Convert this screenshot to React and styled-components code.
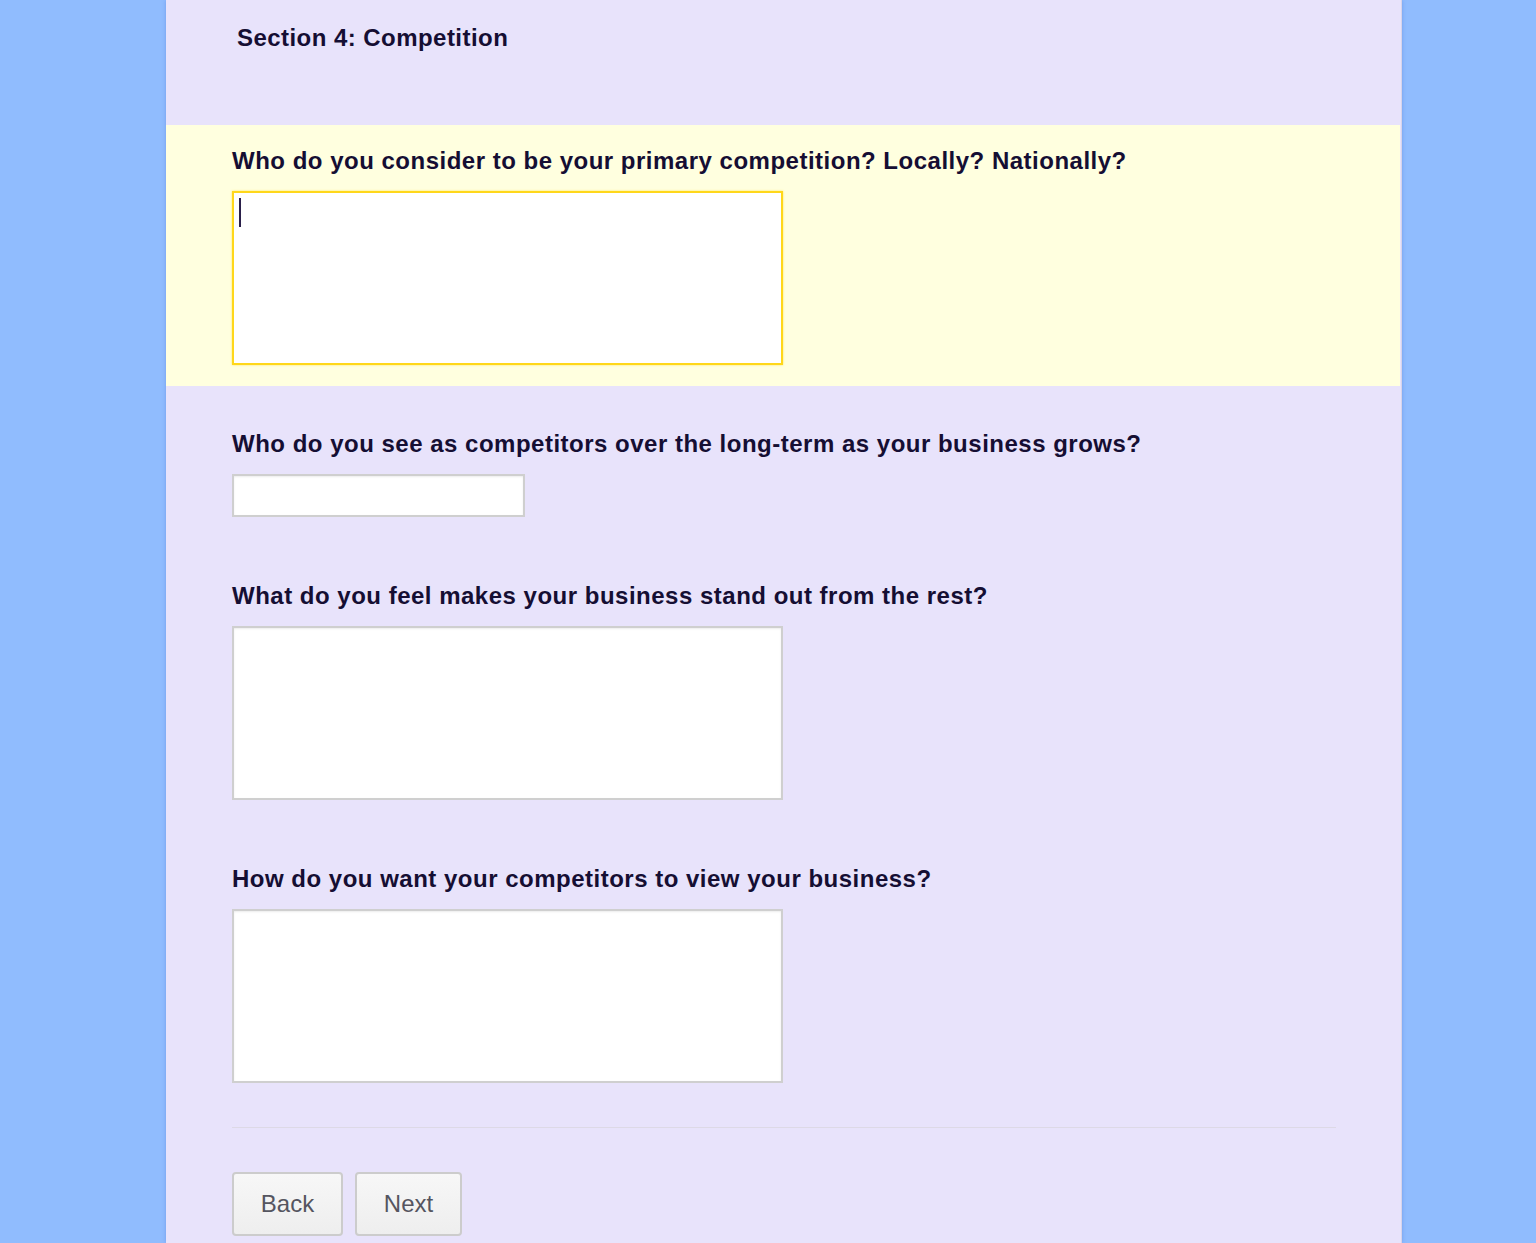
import React from "react";
import styled, { createGlobalStyle } from "styled-components";

const Global = createGlobalStyle`
  html, body { margin: 0; padding: 0; }
  body {
    background: #90bcfe;
    font-family: "Liberation Sans", Arial, sans-serif;
    color: #150e33;
  }
`;

const Page = styled.div`
  display: flex;
  padding-left: 166px;
  min-height: 1243px;
`;

const Panel = styled.main`
  width: 1235px;
  background: #e8e3fb;
  border-right: 1px solid #d8d4ea;
  box-shadow: 0 0 4px rgba(60, 100, 200, 0.35);
  display: flex;
  flex-direction: column;
`;

const Header = styled.header`
  height: 125px;
  padding: 23px 0 0 71px;
  box-sizing: border-box;
`;

const SectionTitle = styled.h1`
  margin: 0;
  font-size: 24px;
  line-height: 30px;
  font-weight: bold;
  letter-spacing: 0.45px;
`;

const Questions = styled.div`
  display: flex;
  flex-direction: column;
  gap: 22px;
`;

const Block = styled.section`
  padding: 21px 65px 21px 66px;
  background: ${(p) => (p.$active ? "#ffffdf" : "transparent")};
  margin-right: ${(p) => (p.$active ? "1px" : "0")};
  display: flex;
  flex-direction: column;
  align-items: flex-start;
  gap: 15px;
`;

const Label = styled.label`
  font-size: 24px;
  line-height: 30px;
  font-weight: bold;
  letter-spacing: 0.5px;
`;

const Area = styled.div`
  width: 551px;
  height: 174px;
  box-sizing: border-box;
  background: #fff;
  border: 2px solid ${(p) => (p.$active ? "#ffd71a" : "#cfcfcf")};
  box-shadow: ${(p) =>
    p.$active ? "0 0 2px rgba(255, 215, 0, 0.6)" : "inset 0 1px 2px rgba(0,0,0,0.08)"};
  position: relative;
`;

const Caret = styled.span`
  position: absolute;
  left: 5px;
  top: 5px;
  width: 2px;
  height: 29px;
  background: #2a1f4a;
`;

const TextInput = styled.div`
  width: 293px;
  height: 43px;
  box-sizing: border-box;
  background: #fff;
  border: 2px solid #cfcfcf;
  box-shadow: inset 0 1px 2px rgba(0,0,0,0.08);
`;

const Footer = styled.footer`
  margin: 23px 65px 0 66px;
  padding-top: 44px;
  border-top: 1px solid #ddd9e6;
  display: flex;
  gap: 12px;
`;

const Button = styled.button`
  width: ${(p) => p.$w}px;
  height: 64px;
  font-family: "Liberation Sans", Arial, sans-serif;
  font-size: 24px;
  color: #555560;
  background: linear-gradient(#f7f7f7, #eeeeee);
  border: 2px solid #cccccc;
  border-radius: 4px;
  padding: 0;
  cursor: pointer;
`;

const questions = [
  { text: "Who do you consider to be your primary competition? Locally? Nationally?", kind: "area", active: true },
  { text: "Who do you see as competitors over the long-term as your business grows?", kind: "input" },
  { text: "What do you feel makes your business stand out from the rest?", kind: "area" },
  { text: "How do you want your competitors to view your business?", kind: "area" },
];

export default function App() {
  return (
    <>
      <Global />
      <Page>
        <Panel>
          <Header>
            <SectionTitle>Section 4: Competition</SectionTitle>
          </Header>
          <Questions>
            {questions.map((q, i) => (
              <Block key={i} $active={q.active}>
                <Label>{q.text}</Label>
                {q.kind === "area" ? (
                  <Area $active={q.active}>{q.active && <Caret />}</Area>
                ) : (
                  <TextInput />
                )}
              </Block>
            ))}
          </Questions>
          <Footer>
            <Button $w={111}>Back</Button>
            <Button $w={107}>Next</Button>
          </Footer>
        </Panel>
      </Page>
    </>
  );
}
